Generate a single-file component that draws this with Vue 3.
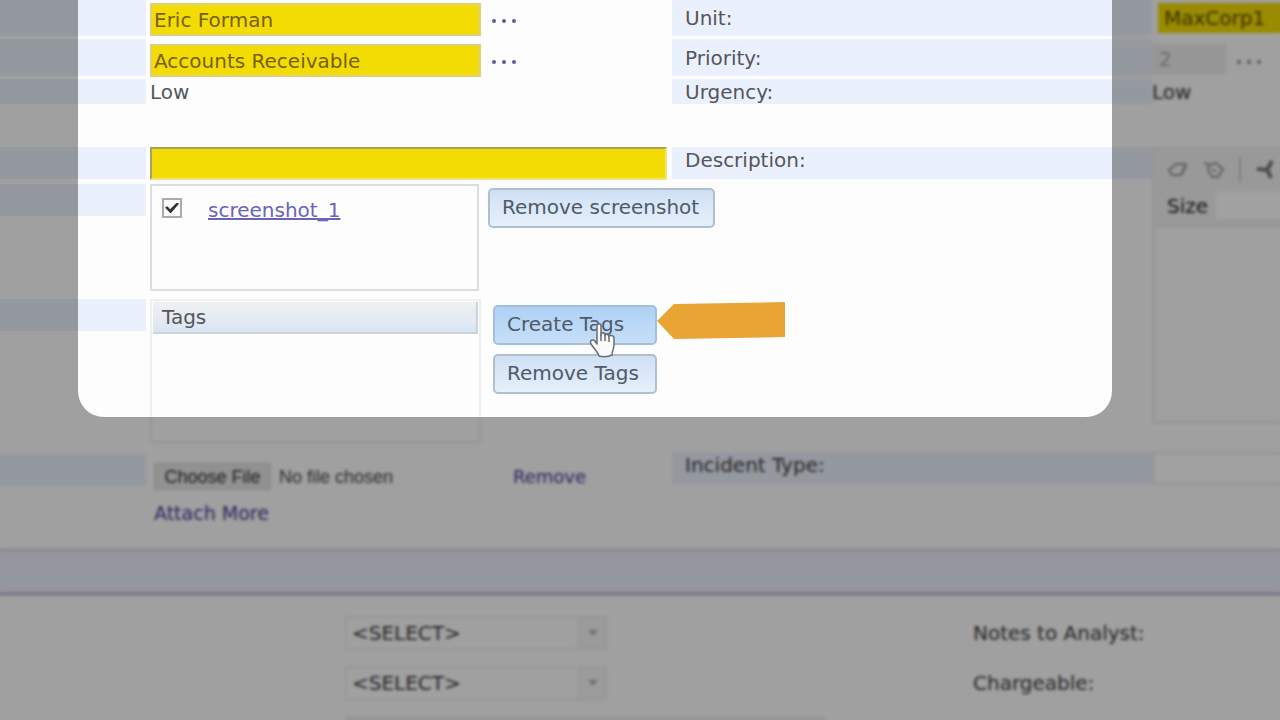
<script setup>
import { ref } from 'vue'

const requester = ref('Eric Forman')
const department = ref('Accounts Receivable')
const subject = ref('')
const unit = ref('MaxCorp1')
const priority = ref('2')
const attached = ref(true)
const incidentType = ref('')
const textSize = ref('')
const lowerRows = [
  { id: 'opt-a', note: 'Notes to Analyst:' },
  { id: 'opt-b', note: 'Chargeable:' }
]
</script>

<template>
  <main class="page">
    <div class="form">
      <section class="pane left">
        <div class="row r1">
          <div class="label"></div>
          <div class="content">
            <input v-model="requester" class="field yellow" type="text" aria-label="Requester" />
            <button class="dots" type="button" aria-label="Look up requester">
              <svg width="26" height="6" viewBox="0 0 26 6"><circle cx="3" cy="3" r="2" /><circle cx="13" cy="3" r="2" /><circle cx="23" cy="3" r="2" /></svg>
            </button>
          </div>
        </div>
        <div class="row r2">
          <div class="label"></div>
          <div class="content">
            <input v-model="department" class="field yellow" type="text" aria-label="Department" />
            <button class="dots" type="button" aria-label="Look up department">
              <svg width="26" height="6" viewBox="0 0 26 6"><circle cx="3" cy="3" r="2" /><circle cx="13" cy="3" r="2" /><circle cx="23" cy="3" r="2" /></svg>
            </button>
          </div>
        </div>
        <div class="row r3">
          <div class="label"></div>
          <div class="content">Low</div>
        </div>
        <div class="row r4">
          <div class="label"></div>
          <div class="content"><input v-model="subject" class="field yellow sunken" type="text" aria-label="Subject" /></div>
        </div>
        <div class="row r5">
          <div class="label"></div>
          <div class="content">
            <div class="files">
              <input v-model="attached" class="tick" type="checkbox" aria-label="screenshot_1" />
              <a href="#" class="shot">screenshot_1</a>
            </div>
            <button class="btn wide" type="button">Remove screenshot</button>
          </div>
        </div>
        <div class="row r6">
          <div class="label"></div>
          <div class="content">
            <div class="tags"><div class="tags-head">Tags</div></div>
            <div class="btns">
              <div class="target">
                <button class="btn hot" type="button">Create Tags</button>
                <svg class="callout" width="130" height="40" viewBox="0 0 130 40"><path d="M1 20 L18 3 L129 1 L129 36 L18 38 Z" fill="#e8a534" /></svg>
                <svg class="hand" width="28" height="36" viewBox="0 0 28 36">
                  <path d="M8 20 V4 C8 1 12 1 12 4 V13 C12 10 16 10 16 13 V14 C16 11 20 12 20 15 C20 12.500 25 13 25 16 V23 C25 27 23 28 23 33 C19 35 14 35 10 34 C9 30 5 27 2 22 C0 18 4 17 6 19 L8 22 Z" fill="#fafafa" stroke="#686e76" stroke-width="1.500" stroke-linejoin="round" />
                  <path d="M12 12 V19 M16 13 V19 M20 15 V20" fill="none" stroke="#686e76" stroke-width="1.500" />
                </svg>
              </div>
              <button class="btn" type="button">Remove Tags</button>
            </div>
          </div>
        </div>
        <div class="row r7">
          <div class="label"></div>
          <div class="content">
            <div class="upload">
              <input class="file" type="file" aria-label="Attachment" />
              <a href="#" class="remove">Remove</a>
            </div>
            <a href="#" class="more">Attach More</a>
          </div>
        </div>
      </section>

      <section class="pane right">
        <div class="row r1">
          <label class="label" for="unit">Unit:</label>
          <div class="content"><input id="unit" v-model="unit" class="field yellow unit" type="text" /></div>
        </div>
        <div class="row r2">
          <label class="label" for="priority">Priority:</label>
          <div class="content">
            <input id="priority" v-model="priority" class="field prio" type="text" disabled />
            <button class="dots faint" type="button" aria-label="Look up priority">
              <svg width="26" height="6" viewBox="0 0 26 6"><circle cx="3" cy="3" r="2" /><circle cx="13" cy="3" r="2" /><circle cx="23" cy="3" r="2" /></svg>
            </button>
          </div>
        </div>
        <div class="row r3">
          <div class="label">Urgency:</div>
          <div class="content">Low</div>
        </div>
        <div class="row r4">
          <div class="label">Description:</div>
          <div class="content editor">
            <div class="tools">
              <div class="icons">
                <svg width="22" height="20" viewBox="0 0 22 20"><path d="M2 10 L9 4 H19 L14 15 H5 Z M14 15 L19 7" /></svg>
                <svg width="22" height="20" viewBox="0 0 22 20"><path d="M1 3 L8 5 M6 5 L13 3 L20 9 L15 17 H9 L5 10 Z M9 9 L13 12" /></svg>
                <span class="sep"></span>
                <svg width="22" height="20" viewBox="0 0 22 20"><path d="M17 1 L12 10 L2 9 M12 9 L16 18" class="heavy" /></svg>
              </div>
              <div class="size">
                <label for="text-size">Size</label>
                <input id="text-size" v-model="textSize" type="text" />
              </div>
            </div>
          </div>
        </div>
        <div class="row r5">
          <label class="label" for="incident">Incident Type:</label>
          <div class="content"><input id="incident" v-model="incidentType" class="field incident" type="text" /></div>
        </div>
      </section>
    </div>

    <div class="band"></div>

    <section class="lower">
      <div v-for="row in lowerRows" :key="row.id" class="lower-row">
        <div class="pick">
          <select :aria-label="row.note"><option>&lt;SELECT&gt;</option></select>
          <span class="drop"><svg width="10" height="6" viewBox="0 0 10 6"><path d="M0 0 H10 L5 6 Z" fill="#b4b4b4" /></svg></span>
        </div>
        <span class="note">{{ row.note }}</span>
      </div>
      <div class="next"></div>
    </section>

    <div class="soft side"></div>
    <div class="soft bottom"></div>
    <div class="spotlight"></div>
  </main>
</template>

<style>
html,
body {
  margin: 0;
  background: #fdfdfd;
}
</style>

<style scoped>
.page {
  position: relative;
  height: 100vh;
  overflow: hidden;
  background: #fdfdfd;
  color: #54565c;
  font: 20px/26px "DejaVu Sans", Verdana, sans-serif;
}
.page * {
  box-sizing: border-box;
}
.form {
  display: grid;
  grid-template-columns: minmax(0, 672fr) minmax(0, 608fr);
}
.pane {
  display: flex;
  flex-direction: column;
}
.row {
  display: grid;
  align-items: start;
}
.left .row {
  grid-template-columns: 146px minmax(0, 1fr);
  column-gap: 4px;
}
.right .row {
  grid-template-columns: 480px minmax(0, 1fr);
}
.label {
  background: #ebf1fc;
  min-height: 32px;
}
.right .label {
  padding-left: 13px;
}
.content {
  display: flex;
  align-items: flex-start;
}
.field {
  font: inherit;
  color: inherit;
  border: 1px solid #d2d2d2;
  background: #fff;
  height: 33px;
  padding: 0 4px;
  margin: 0;
  width: 331px;
  outline: none;
}
.yellow {
  background: #f3dc04;
  color: #77600c;
  border: 2px solid #dcd080;
  padding: 0 2px;
}
.sunken {
  width: 517px;
  border-color: #a8a060 #f0e480 #f0e480 #a8a060;
}
.dots {
  border: 0;
  background: none;
  padding: 0;
  margin-left: 10px;
  height: 36px;
  display: flex;
  align-items: center;
}
.dots svg {
  fill: #5a5f8c;
}
.r1 {
  height: 36px;
}
.r1 .label {
  height: 36px;
  line-height: 36px;
}
.r1 .content {
  padding-top: 3px;
}
.r2 {
  margin-top: 3px;
  height: 37px;
}
.r2 .label {
  height: 37px;
  line-height: 38px;
}
.r2 .content {
  padding-top: 5px;
}
.r3 {
  margin-top: 3px;
}
.r3 .label {
  height: 25px;
  min-height: 0;
}
.r3 .content {
  height: 25px;
}
.r4 {
  margin-top: 43px;
}
.left .r5 {
  margin-top: 4px;
}
.files {
  flex: none;
  width: 329px;
  height: 107px;
  border: 2px solid #dcdde0;
  padding: 11px 10px;
  display: flex;
  align-items: flex-start;
}
.tick {
  appearance: none;
  width: 20px;
  height: 20px;
  margin: 1px 26px 0 0;
  border: 2px solid #aaa;
  background: #fafafa;
  display: grid;
  place-items: center;
}
.tick:checked::before {
  content: "";
  width: 14px;
  height: 11px;
  background: #333;
  clip-path: polygon(0 45%, 18% 35%, 36% 62%, 85% 0, 100% 12%, 40% 100%);
}
.shot {
  color: #6a64b8;
}
.btn {
  flex: none;
  font: inherit;
  color: #505a68;
  height: 40px;
  width: 164px;
  padding: 0 0 2px 12px;
  text-align: left;
  border: 2px solid #b0bfcd;
  border-radius: 5px;
  background: linear-gradient(#cfe0f5, #e6f0fb);
  white-space: nowrap;
}
.btn.wide {
  width: 227px;
  margin: 4px 0 0 9px;
}
.btn.hot {
  background: linear-gradient(#aed1f5, #c6dff9);
  border-color: #a5bfda;
}
.r6 {
  margin-top: 8px;
}
.tags {
  flex: none;
  width: 331px;
  height: 144px;
  border: 2px solid #eeeff0;
  padding: 1px;
}
.tags-head {
  height: 32px;
  line-height: 30px;
  padding-left: 9px;
  border: solid #cbd3dc;
  border-width: 0 2px 2px 0;
  background: linear-gradient(#f0f1f2, #d9e5f2);
}
.btns {
  display: flex;
  flex-direction: column;
  gap: 9px;
  padding: 6px 0 0 12px;
}
.target {
  position: relative;
  height: 40px;
}
.callout {
  position: absolute;
  left: 163px;
  top: -4px;
}
.hand {
  position: absolute;
  left: 96px;
  top: 17px;
}
.r7 {
  margin-top: 11px;
}
.r7 .content {
  flex-direction: column;
  padding: 9px 0 22px 4px;
}
.upload {
  display: flex;
  align-items: center;
  height: 27px;
}
.file {
  width: 359px;
  font: 18px/24px "Liberation Sans", Arial, sans-serif;
  color: #4c4c4c;
}
.file::file-selector-button {
  font: inherit;
  color: #333;
  width: 117px;
  height: 27px;
  padding: 0;
  margin-right: 8px;
  border: 1px solid #d8d8d8;
  background: #e6e6e6;
}
.remove,
.more {
  color: #463c96;
  text-decoration: none;
}
.remove {
  font-size: 18px;
}
.more {
  font-size: 19px;
  margin-top: 10px;
}
.right .r1 .content {
  padding-left: 6px;
}
.unit {
  width: 100%;
  height: 30px;
  padding: 0 4px;
  color: #655000;
  border-color: #f3dc04;
}
.prio {
  width: 74px;
  height: 30px;
  background: #eee;
  border-color: #eee;
  color: #aaa;
  padding: 0 6px;
}
.faint svg {
  fill: #8b8b96;
}
.editor {
  height: 277px;
  border: solid #efefef;
  border-width: 3px 0 3px 3px;
}
.tools {
  flex: 1;
  background: #f3f3f3;
  height: 77px;
  border-bottom: 2px solid #eaeaea;
  overflow: hidden;
}
.icons {
  display: flex;
  align-items: center;
  gap: 14px;
  width: 140px;
  height: 40px;
  padding-left: 12px;
}
.icons svg {
  flex: none;
  fill: none;
  stroke: #999;
  stroke-width: 2;
}
.icons .heavy {
  stroke: #777;
  stroke-width: 4;
}
.sep {
  width: 2px;
  height: 26px;
  background: #ccc;
}
.size {
  display: flex;
  align-items: center;
  gap: 8px;
  padding: 2px 0 0 12px;
  color: #222;
}
.size input {
  flex: 1;
  min-width: 0;
  height: 27px;
  border: 0;
  background: #fff;
}
.right .r5 {
  margin-top: 28px;
}
.incident {
  width: 100%;
  border: 2px solid #ececec;
  border-right: 0;
}
.band {
  height: 48px;
  border-top: 4px solid #e2e1ea;
  border-bottom: 4px solid #c8c4d6;
  background: linear-gradient(#efecfa, #ebf0fb 35%, #ebf0fb 60%, #efecfa);
}
.lower {
  padding: 20px 0 0 345px;
}
.lower-row {
  display: grid;
  grid-template-columns: 628px 1fr;
  align-items: center;
  margin-bottom: 16px;
}
.pick {
  position: relative;
  width: 262px;
  height: 34px;
}
.pick select {
  appearance: none;
  width: 100%;
  height: 100%;
  font: inherit;
  color: inherit;
  padding: 0 0 0 5px;
  border: 2px solid #f0f0f0;
  background: #fdfdfd;
}
.drop {
  position: absolute;
  top: 0;
  right: 0;
  width: 29px;
  height: 34px;
  background: #f5f5f7;
  border: 2px solid #eee;
  display: grid;
  place-items: center;
  pointer-events: none;
}
.next {
  width: 480px;
  height: 20px;
  background: #eee;
}
.lower,
.r7,
.right .content,
.right .r5 {
  color: #3c3c3c;
}
.right .prio {
  color: #aaa;
}
.soft {
  position: absolute;
  pointer-events: none;
  backdrop-filter: blur(1.5px);
}
.side {
  top: 0;
  right: 0;
  width: 168px;
  height: 417px;
}
.bottom {
  inset: 417px 0 0;
}
.spotlight {
  position: absolute;
  top: -40px;
  left: 78px;
  right: 168px;
  height: 457px;
  border-radius: 26px;
  box-shadow: 0 0 0 1400px rgba(0, 0, 0, 0.37);
  pointer-events: none;
}
</style>
